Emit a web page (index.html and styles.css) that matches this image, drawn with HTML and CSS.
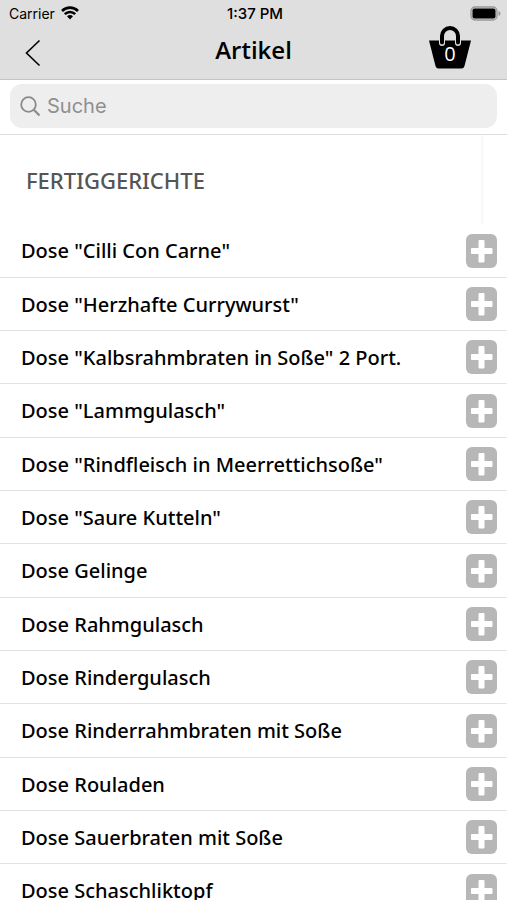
FILE: index.html
```html
<!DOCTYPE html>
<html lang="de">
<head>
    <meta charset="UTF-8" />
    <meta name="viewport" content="width=device-width, initial-scale=1.0" />
    <title>Artikel</title>

    <link rel="stylesheet" href="styles.css">
</head>
<body>
    <svg class="symbols" aria-hidden="true">
        <symbol id="plus" viewBox="0 0 31 34">
            <rect width="31" height="34" rx="6" fill="#b7b7b7" />
            <path d="M13 6.500h5v8h8v5h-8v8.500h-5v-8.500H5.500v-5h7.500z" fill="#ffffff" stroke="#ffffff" stroke-width="1" stroke-linejoin="round" />
        </symbol>
    </svg>

    <header class="header">
        <div class="status-bar">
            <div class="carrier">
                <span>Carrier</span>
                <svg width="18" height="14" viewBox="0 0 18 14" fill="none" stroke="#000000" stroke-width="2.600">
                    <path d="M1 5C5.500.500 12.500.500 17 5" />
                    <path d="M3.800 8.200C6.800 5.200 11.200 5.200 14.200 8.200" />
                    <path d="M6 10.300C7.700 8.600 10.300 8.600 12 10.300L9 13.500z" fill="#000000" stroke="none" />
                </svg>
            </div>
            <span class="time">1:37 PM</span>
            <svg class="battery" width="31" height="15" viewBox="0 0 31 15">
                <rect x="1" y="1" width="26" height="13" rx="4" fill="#d4d4d4" stroke="#999999" stroke-width="1.300" />
                <rect x="2.500" y="2.500" width="23" height="10" rx="2" fill="#000000" />
                <path d="M28.500 5v5c1.300-.6 2-1.500 2-2.500s-.7-1.900-2-2.500z" fill="#999999" />
            </svg>
        </div>
        <div class="nav-bar">
            <button type="button" class="back-btn" aria-label="Zurück">
                <svg width="16" height="28" viewBox="0 0 16 28" fill="none" stroke="#000000" stroke-width="1.600">
                    <path d="M14.500 1.500L1.500 14L14.500 26.500" />
                </svg>
            </button>
            <h1>Artikel</h1>
            <button type="button" class="cart-btn" aria-label="Warenkorb">
                <svg width="44" height="45" viewBox="0 0 44 45">
                    <path d="M1 14.500H43L36.500 40Q35.800 42.500 33.500 42.500H10.500Q8.200 42.500 7.500 40z" fill="#000000" />
                    <path d="M14 17V10a8 8 0 0 1 16 0V17" fill="none" stroke="#dfdfdf" stroke-width="6" stroke-linecap="round" />
                    <path d="M14 16.500V10a8 8 0 0 1 16 0V16.500" fill="none" stroke="#000000" stroke-width="4" stroke-linecap="round" />
                </svg>
                <span class="cart-count">0</span>
            </button>
        </div>
    </header>

    <form class="search">
        <label class="search-box">
            <svg width="21" height="21" viewBox="0 0 21 21" fill="none" stroke="#8b8b8b" stroke-width="1.800">
                <circle cx="8.500" cy="8.500" r="7.300" />
                <path d="M13.800 13.800L19.500 19.500" stroke-width="2.200" />
            </svg>
            <input type="text" name="search" placeholder="Suche" aria-label="Suche" />
        </label>
    </form>

    <main class="content">
        <div class="section-header">
            <h2>FERTIGGERICHTE</h2>
        </div>
        <ul class="article-list">
            <li><span>Dose "Cilli Con Carne"</span><button type="button" class="add-btn" aria-label="Hinzufügen"><svg><use href="#plus" /></svg></button></li>
            <li><span>Dose "Herzhafte Currywurst"</span><button type="button" class="add-btn" aria-label="Hinzufügen"><svg><use href="#plus" /></svg></button></li>
            <li><span>Dose "Kalbsrahmbraten in Soße" 2 Port.</span><button type="button" class="add-btn" aria-label="Hinzufügen"><svg><use href="#plus" /></svg></button></li>
            <li><span>Dose "Lammgulasch"</span><button type="button" class="add-btn" aria-label="Hinzufügen"><svg><use href="#plus" /></svg></button></li>
            <li><span>Dose "Rindfleisch in Meerrettichsoße"</span><button type="button" class="add-btn" aria-label="Hinzufügen"><svg><use href="#plus" /></svg></button></li>
            <li><span>Dose "Saure Kutteln"</span><button type="button" class="add-btn" aria-label="Hinzufügen"><svg><use href="#plus" /></svg></button></li>
            <li><span>Dose Gelinge</span><button type="button" class="add-btn" aria-label="Hinzufügen"><svg><use href="#plus" /></svg></button></li>
            <li><span>Dose Rahmgulasch</span><button type="button" class="add-btn" aria-label="Hinzufügen"><svg><use href="#plus" /></svg></button></li>
            <li><span>Dose Rindergulasch</span><button type="button" class="add-btn" aria-label="Hinzufügen"><svg><use href="#plus" /></svg></button></li>
            <li><span>Dose Rinderrahmbraten mit Soße</span><button type="button" class="add-btn" aria-label="Hinzufügen"><svg><use href="#plus" /></svg></button></li>
            <li><span>Dose Rouladen</span><button type="button" class="add-btn" aria-label="Hinzufügen"><svg><use href="#plus" /></svg></button></li>
            <li><span>Dose Sauerbraten mit Soße</span><button type="button" class="add-btn" aria-label="Hinzufügen"><svg><use href="#plus" /></svg></button></li>
            <li><span>Dose Schaschliktopf</span><button type="button" class="add-btn" aria-label="Hinzufügen"><svg><use href="#plus" /></svg></button></li>
        </ul>
    </main>
</body>
</html>
```
FILE: styles.css
```css
* {
    box-sizing: border-box;
}

body {
    font-family: 'Noto Sans', 'Open Sans', sans-serif;
    margin: 0;
    height: 100vh;
    display: flex;
    flex-direction: column;
    overflow: hidden;
    background-color: #ffffff;
    color: #000000;
}

button {
    padding: 0;
    border: none;
    background: none;
    cursor: pointer;
}

svg {
    display: block;
}

.symbols {
    display: none;
}

.header {
    flex: none;
    background-color: #dfdfdf;
    border-bottom: 1px solid #c4c4c4;
}

.status-bar {
    display: grid;
    grid-template-columns: 1fr auto 1fr;
    align-items: center;
    height: 26px;
    padding: 0 6px 0 9px;
    font-family: Inter, sans-serif;
    font-size: 14px;
}

.carrier {
    display: flex;
    align-items: center;
    gap: 6px;
}

.time {
    font-size: 15px;
    font-weight: 500;
}

.battery {
    justify-self: end;
}

.nav-bar {
    display: grid;
    grid-template-columns: 1fr auto 1fr;
    align-items: center;
    height: 53px;
    padding: 0 35px 0 25px;
}

.back-btn {
    justify-self: start;
}

h1 {
    align-self: start;
    margin: 0;
    padding-left: 10px;
    font-family: 'Open Sans', sans-serif;
    font-size: 24px;
    font-weight: 600;
    line-height: 48px;
}

.cart-btn {
    position: relative;
    justify-self: end;
    align-self: start;
}

.cart-count {
    position: absolute;
    top: 15px;
    left: 0;
    width: 100%;
    color: #ffffff;
    font-family: 'Open Sans', sans-serif;
    font-size: 20px;
    line-height: 26px;
    text-align: center;
}

.search {
    flex: none;
    padding: 4px 10px 6px;
    border-bottom: 1px solid #dddddd;
}

.search-box {
    display: flex;
    align-items: center;
    gap: 6px;
    height: 44px;
    padding: 0 10px;
    border-radius: 12px;
    background-color: #eeeeee;
}

.search-box input {
    flex: 1;
    min-width: 0;
    padding: 0;
    border: none;
    outline: none;
    background: none;
    font-family: Inter, sans-serif;
    font-size: 20px;
}

.search-box input::placeholder {
    color: #8f8f8f;
}

.content {
    flex: 1;
    overflow-y: auto;
    scrollbar-width: none;
}

.section-header {
    display: flex;
    align-items: center;
    height: 89px;
    margin-right: 24px;
    padding-left: 26px;
    border-right: 2px solid #f8f8f8;
}

h2 {
    margin: 0;
    color: #555555;
    font-size: 22px;
    font-weight: 500;
}

.article-list {
    margin: 0;
    padding: 0;
    list-style: none;
}

.article-list li {
    display: flex;
    justify-content: space-between;
    align-items: center;
    height: 53px;
    padding: 0 10px 0 21px;
    border-bottom: 1px solid #e2e2e2;
    font-size: 20px;
    font-weight: 500;
}

.article-list li:nth-child(3n + 1) {
    height: 54px;
}

.add-btn svg {
    width: 31px;
    height: 34px;
}
```
